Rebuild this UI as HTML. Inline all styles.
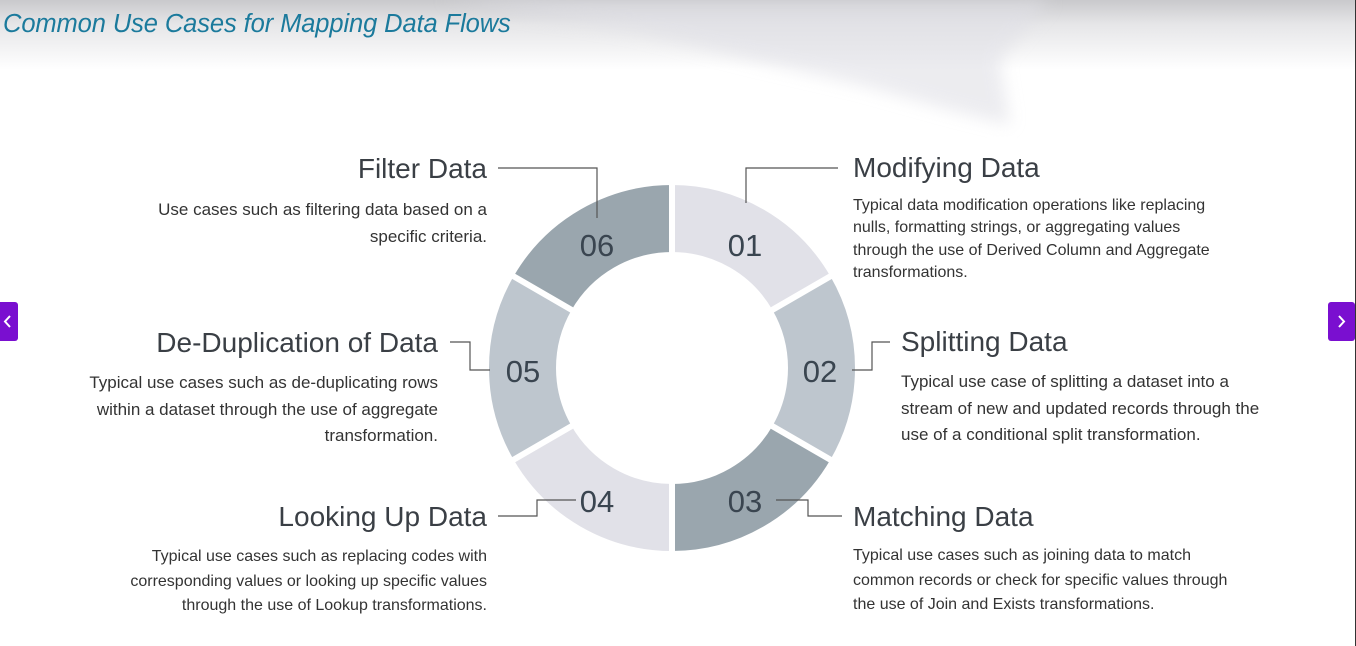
<!DOCTYPE html>
<html><head><meta charset="utf-8"><style>
html,body{margin:0;padding:0}
body{width:1356px;height:646px;position:relative;overflow:hidden;background:#fff;font-family:"Liberation Sans",Arial,sans-serif;color:#333}
.top{position:absolute;left:0;top:0;width:1356px;height:70px;background:linear-gradient(#c9c9cc,#e6e6e8 35%,#fff)}
.title{position:absolute;left:3px;top:10px;font-size:25.5px;font-style:italic;color:#1b7a9c;letter-spacing:-0.1px}
.h{position:absolute;font-size:28px;color:#3a3f45;white-space:nowrap;line-height:32px}
.b{position:absolute;font-size:16px;color:#333;white-space:nowrap}
.l{font-size:17px}
.r{text-align:right}
.btn{position:absolute;width:18px;height:39px;background:#7a0fd0;border-radius:3px;top:302px}
</style></head><body>
<div class="top"></div>
<svg style="position:absolute;left:0;top:0" width="1356" height="140">
<defs><filter id="bl"><feGaussianBlur stdDeviation="8"/></filter></defs>
<path d="M440 0 L1050 0 L1000 60 L1010 125 L950 110 L860 85 L760 62 L630 30 Z" fill="#e0e0e6" filter="url(#bl)" opacity="0.6"/>
</svg>
<div class="title">Common Use Cases for Mapping Data Flows</div>

<svg style="position:absolute;left:0;top:0" width="1356" height="646">
<g fill="none" stroke-width="67">
<circle cx="672" cy="368" r="149.5" stroke="#e1e1e8" stroke-dasharray="156.55 782.8" transform="rotate(-90 672 368)"/>
<circle cx="672" cy="368" r="149.5" stroke="#bec6ce" stroke-dasharray="156.55 782.8" transform="rotate(-30 672 368)"/>
<circle cx="672" cy="368" r="149.5" stroke="#9aa6ae" stroke-dasharray="156.55 782.8" transform="rotate(30 672 368)"/>
<circle cx="672" cy="368" r="149.5" stroke="#e1e1e8" stroke-dasharray="156.55 782.8" transform="rotate(90 672 368)"/>
<circle cx="672" cy="368" r="149.5" stroke="#bec6ce" stroke-dasharray="156.55 782.8" transform="rotate(150 672 368)"/>
<circle cx="672" cy="368" r="149.5" stroke="#9aa6ae" stroke-dasharray="156.55 782.8" transform="rotate(210 672 368)"/>
</g>
<g stroke="#fff" stroke-width="6">
<line x1="672" y1="368" x2="672" y2="170"/>
<line x1="672" y1="368" x2="672" y2="566"/>
<line x1="672" y1="368" x2="843" y2="269"/>
<line x1="672" y1="368" x2="843" y2="467"/>
<line x1="672" y1="368" x2="501" y2="269"/>
<line x1="672" y1="368" x2="501" y2="467"/>
</g>
<g fill="none" stroke="#555" stroke-width="1.2">
<polyline points="498,168 597,168 597,218"/>
<polyline points="838,168 746,168 746,203"/>
<polyline points="450,342 470,342 470,370 490,370"/>
<polyline points="852,370 872,370 872,342 890,342"/>
<polyline points="498,516 537,516 537,500 576,500"/>
<polyline points="776,500 808,500 808,516 842,516"/>
</g>
<g font-family="Liberation Sans, Arial, sans-serif" font-size="31" fill="#3a4550" text-anchor="middle">
<text x="597" y="256">06</text>
<text x="745" y="256">01</text>
<text x="523" y="382">05</text>
<text x="820" y="382">02</text>
<text x="597" y="512">04</text>
<text x="745" y="512">03</text>
</g>
</svg>

<div class="h r" style="right:869px;top:153px">Filter Data</div>
<div class="b l r" style="right:869px;top:196px;line-height:27px">Use cases such as filtering data based on a<br>specific criteria.</div>

<div class="h" style="left:853px;top:152px">Modifying Data</div>
<div class="b" style="left:853px;top:195px;line-height:22.3px">Typical data modification operations like replacing<br>nulls, formatting strings, or aggregating values<br>through the use of Derived Column and Aggregate<br>transformations.</div>

<div class="h r" style="right:918px;top:327px">De-Duplication of Data</div>
<div class="b l r" style="right:918px;top:370px;line-height:26.5px">Typical use cases such as de-duplicating rows<br>within a dataset through the use of aggregate<br>transformation.</div>

<div class="h" style="left:901px;top:326px">Splitting Data</div>
<div class="b l" style="left:901px;top:369px;line-height:26.5px">Typical use case of splitting a dataset into a<br>stream of new and updated records through the<br>use of a conditional split transformation.</div>

<div class="h r" style="right:869px;top:501px">Looking Up Data</div>
<div class="b r" style="right:869px;top:545px;line-height:24.5px">Typical use cases such as replacing codes with<br>corresponding values or looking up specific values<br>through the use of Lookup transformations.</div>

<div class="h" style="left:853px;top:501px">Matching Data</div>
<div class="b" style="left:853px;top:544px;line-height:24.5px">Typical use cases such as joining data to match<br>common records or check for specific values through<br>the use of Join and Exists transformations.</div>

<div class="btn" style="left:0;border-radius:0 3px 3px 0"><svg width="18" height="39"><polyline points="10,14 5,19.5 10,25" fill="none" stroke="#fff" stroke-width="2"/></svg></div>
<div class="btn" style="left:1328px;width:27px"><svg width="27" height="39"><polyline points="11,14 16,19.5 11,25" fill="none" stroke="#fff" stroke-width="2"/></svg></div>
<div style="position:absolute;left:1355px;top:0;width:1px;height:646px;background:#333"></div>
</body></html>
